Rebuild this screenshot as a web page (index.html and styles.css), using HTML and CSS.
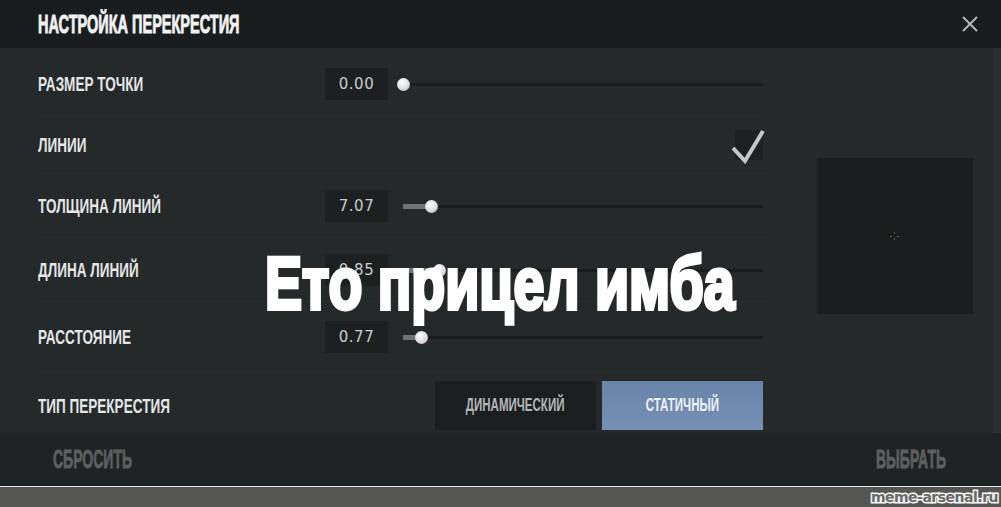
FILE: index.html
```html
<!DOCTYPE html>
<html lang="ru">
<head>
    <meta charset="UTF-8">
    <meta name="viewport" content="width=device-width, initial-scale=1.0">
    <title>Настройка перекрестия</title>
    <link rel="stylesheet" href="styles.css">
</head>
<body>
    <div class="window">
        <header class="topbar">
            <h1 class="title"><span class="squeeze">НАСТРОЙКА ПЕРЕКРЕСТИЯ</span></h1>
            <button class="close" aria-label="Закрыть">
                <svg width="16" height="16" viewBox="0 0 16 16">
                    <path d="M1 1 L15 15 M15 1 L1 15" stroke="#b4b6b7" stroke-width="2" fill="none"/>
                </svg>
            </button>
        </header>

        <main class="content">
            <div class="settings">
                <div class="row">
                    <div class="label"><span class="squeeze">РАЗМЕР ТОЧКИ</span></div>
                    <div class="value">0.00</div>
                    <div class="slider">
                        <div class="fill" style="width: 0%"></div>
                        <div class="knob" style="left: 0%"></div>
                    </div>
                </div>
                <div class="row row-short">
                    <div class="label"><span class="squeeze">ЛИНИИ</span></div>
                    <div class="check">
                        <svg width="28" height="30" viewBox="0 0 28 30">
                            <path d="M-2 18 L10 31 L28 1" stroke="#c4c6c8" stroke-width="4" fill="none"/>
                        </svg>
                    </div>
                </div>
                <div class="row">
                    <div class="label"><span class="squeeze">ТОЛЩИНА ЛИНИЙ</span></div>
                    <div class="value">7.07</div>
                    <div class="slider">
                        <div class="fill" style="width: 8%"></div>
                        <div class="knob" style="left: 8%"></div>
                    </div>
                </div>
                <div class="row">
                    <div class="label"><span class="squeeze">ДЛИНА ЛИНИЙ</span></div>
                    <div class="value">0.85</div>
                    <div class="slider">
                        <div class="fill" style="width: 10%"></div>
                        <div class="knob" style="left: 10%"></div>
                    </div>
                </div>
                <div class="row row-tall">
                    <div class="label"><span class="squeeze">РАССТОЯНИЕ</span></div>
                    <div class="value">0.77</div>
                    <div class="slider">
                        <div class="fill" style="width: 5%"></div>
                        <div class="knob" style="left: 5%"></div>
                    </div>
                </div>
                <div class="row row-last">
                    <div class="label"><span class="squeeze">ТИП ПЕРЕКРЕСТИЯ</span></div>
                    <div class="modes">
                        <button class="mode"><span class="squeeze">ДИНАМИЧЕСКИЙ</span></button>
                        <button class="mode active"><span class="squeeze">СТАТИЧНЫЙ</span></button>
                    </div>
                </div>
            </div>

            <aside class="preview">
                <svg width="156" height="156" viewBox="0 0 156 156">
                    <g stroke="#3f6e3c" stroke-width="1">
                        <path d="M77.5 74 V76 M77.5 80 V82 M73 78.5 H75 M80 78.5 H82"/>
                    </g>
                </svg>
            </aside>

            <div class="scroll"></div>
        </main>

        <footer class="actions">
            <button class="action"><span class="squeeze">СБРОСИТЬ</span></button>
            <button class="action action-right"><span class="squeeze">ВЫБРАТЬ</span></button>
        </footer>
    </div>

    <div class="brand-bar">
        <span class="brand">meme-arsenal.ru</span>
    </div>

    <div class="caption">Ето прицел имба</div>
</body>
</html>
```

FILE: styles.css
```css
body {
    margin: 0;
    padding: 0;
    width: 1001px;
    height: 507px;
    overflow: hidden;
    background-color: #555653;
    font-family: "Liberation Sans", "DejaVu Sans Condensed", sans-serif;
    position: relative;
}

button {
    font-family: inherit;
    border: none;
    background: none;
    padding: 0;
    cursor: pointer;
}

/* the game font is very narrow, so squeeze a regular sans */
.squeeze {
    display: inline-block;
    transform: scaleX(0.64);
    transform-origin: left center;
    white-space: nowrap;
}

.window {
    height: 486px;
    display: flex;
    flex-direction: column;
}

/* header */
.topbar {
    height: 48px;
    flex: none;
    background-color: #1a1d1e;
    display: flex;
    align-items: center;
    justify-content: space-between;
    padding: 0 23px 0 38px;
}
.title {
    margin: 0;
    font-size: 25px;
    font-weight: bold;
    color: #f2f2f2;
    line-height: 1;
    -webkit-text-stroke: 0.9px #f2f2f2;
}
.title .squeeze {
    transform: scaleX(0.58);
}
.close {
    width: 16px;
    height: 16px;
    display: block;
}
.close svg {
    display: block;
}

/* settings */
.content {
    flex: 1;
    display: flex;
    background-color: #25292a;
}
.settings {
    width: 728px;
    margin-left: 38px;
    padding-top: 4px;
    display: flex;
    flex-direction: column;
}
.row {
    height: 64px;
    flex: none;
    display: flex;
    align-items: center;
    padding-right: 3px;
    border-bottom: 1px solid #292d2e;
    box-sizing: border-box;
}
.row-short {
    height: 58px;
}
.row-tall {
    height: 70px;
}
.row-last {
    flex: 1;
    height: auto;
    border-bottom: none;
    align-items: flex-end;
    padding-bottom: 3px;
}
.row-last .label {
    align-self: center;
    padding-top: 8px;
}
.label {
    width: 287px;
    flex: none;
    font-size: 21px;
    font-weight: bold;
    color: #e4e6e7;
    line-height: 1;
}
.label .squeeze {
    transform: scaleX(0.645);
}
.value {
    width: 63px;
    height: 32px;
    flex: none;
    background-color: #1d2021;
    color: #c9cbcc;
    font-family: "DejaVu Sans", sans-serif;
    font-size: 15px;
    letter-spacing: 0.5px;
    display: flex;
    align-items: center;
    justify-content: center;
}
.slider {
    flex: 1;
    margin-left: 15px;
    height: 3px;
    background-color: #1a1d1e;
    position: relative;
    margin-top: 2px;
}
.fill {
    position: absolute;
    left: 0;
    top: -1px;
    height: 5px;
    background-color: #707374;
}
.knob {
    position: absolute;
    top: 50%;
    width: 13px;
    height: 13px;
    margin: -6.5px 0 0 -6.5px;
    border-radius: 50%;
    background: radial-gradient(circle at 40% 35%, #ffffff, #dcdcdc 55%, #a8a8a8);
}
.check {
    margin-left: auto;
    width: 28px;
    height: 30px;
    background-color: #1e2122;
}
.check svg {
    display: block;
    overflow: visible;
}
.modes {
    margin-left: auto;
    display: flex;
    gap: 6px;
}
.mode {
    width: 161px;
    height: 49px;
    background-color: #1c1f20;
    color: #b3b6b8;
    font-size: 18px;
    font-weight: bold;
    display: flex;
    align-items: center;
    justify-content: center;
}
.mode .squeeze {
    transform: scaleX(0.64);
    transform-origin: center;
}
.mode.active {
    background: linear-gradient(#6a84a9, #7690b5);
    color: #eef2f8;
}

/* preview */
.preview {
    margin: 110px 0 0 51px;
    width: 156px;
    height: 156px;
    background-color: #1b1e1f;
}
.preview svg {
    display: block;
}
.scroll {
    margin-left: auto;
    width: 8px;
    background-color: #2a2e2f;
}

/* bottom actions */
.actions {
    flex: none;
    height: 53px;
    background-color: #202324;
    display: flex;
    align-items: center;
    justify-content: space-between;
    padding: 0 55px 0 53px;
}
.action {
    font-size: 25px;
    font-weight: bold;
    color: #5c6061;
    line-height: 1;
    -webkit-text-stroke: 0.8px #5c6061;
}
.action .squeeze {
    transform: scaleX(0.56);
}
.action-right .squeeze {
    transform-origin: right center;
}

/* site strip */
.brand-bar {
    height: 20px;
    border-top: 1px solid #e8e8e8;
    display: flex;
    justify-content: flex-end;
    align-items: center;
    padding-right: 3px;
}
.brand {
    font-family: "DejaVu Sans", sans-serif;
    font-weight: bold;
    font-size: 14px;
    color: #6a6a6a;
    -webkit-text-stroke: 3px #f4f4f4;
    paint-order: stroke fill;
    letter-spacing: -0.5px;
    line-height: 1;
}

/* meme caption over the window */
.caption {
    position: absolute;
    left: 265px;
    top: 247px;
    font-size: 74px;
    line-height: 1;
    font-weight: bold;
    color: #ffffff;
    white-space: nowrap;
    transform: scaleX(0.75);
    transform-origin: left top;
    -webkit-text-stroke: 4px #ffffff;
    text-shadow: 1px 1px 0 #000, -1px -1px 0 #000, 1px -1px 0 #000, -1px 1px 0 #000;
}
```
